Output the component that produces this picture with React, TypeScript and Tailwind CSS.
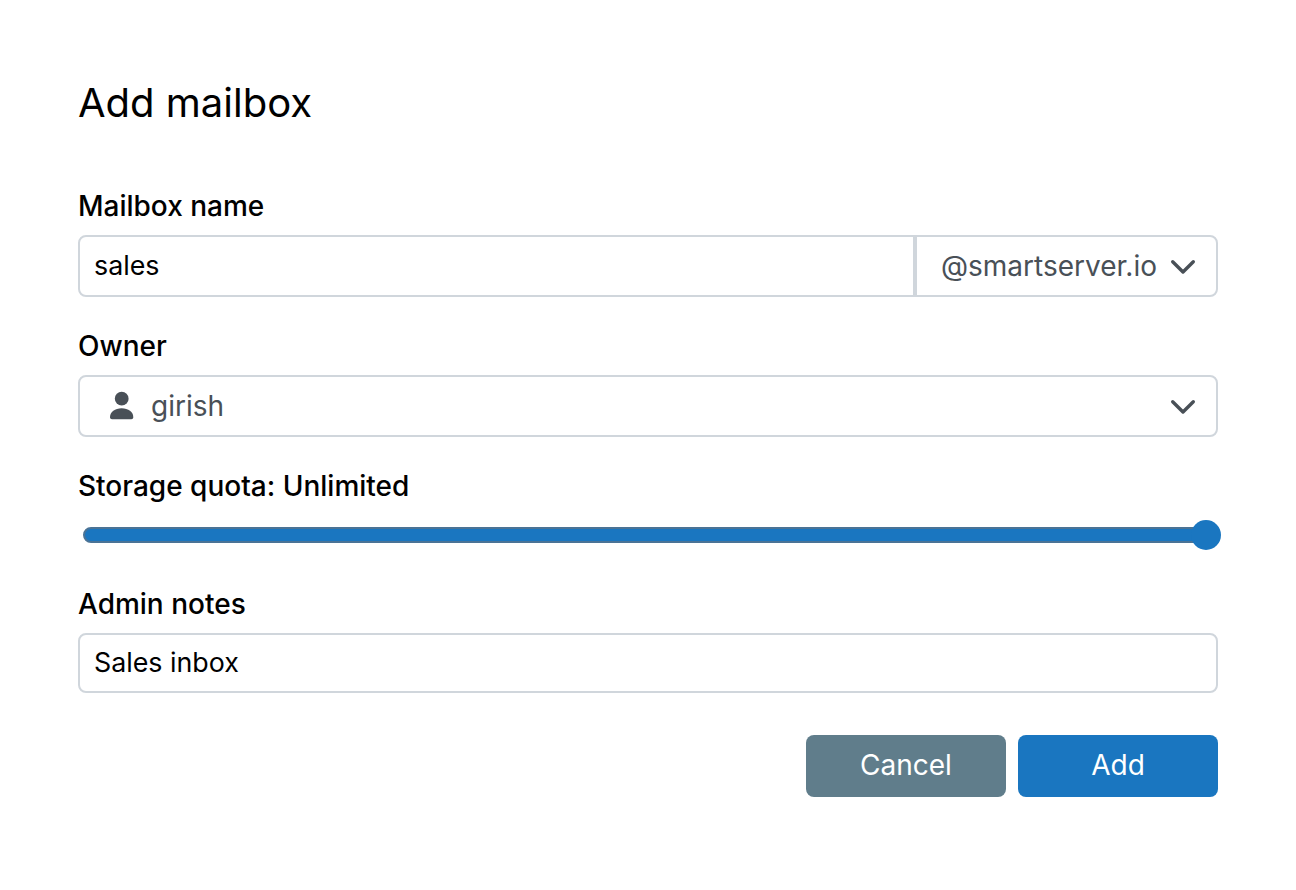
const BORDER = "border-2 border-[#d0d6dc]";

function Chevron() {
  return (
    <svg className="h-[28px] w-[28px] shrink-0 text-[#495057]" viewBox="0 0 28 28" fill="none">
      <path d="M3.7 9.7l10.3 10.3 10.3-10.3" stroke="currentColor" strokeWidth="3.4" strokeLinecap="round" strokeLinejoin="round" />
    </svg>
  );
}

function PersonIcon() {
  return (
    <svg className="h-[30px] w-[30px] shrink-0 text-[#495057]" viewBox="0 0 30 30" fill="currentColor">
      <circle cx="14.7" cy="7.7" r="6.9" />
      <path d="M3 26.3c0-5.5 5-9 11.65-9s11.65 3.5 11.65 9c0 1.1-.9 2-2 2H5c-1.1 0-2-.9-2-2z" />
    </svg>
  );
}

export default function App() {
  return (
    <div className="min-h-[890px] bg-white px-[78px] pt-[76px] font-['Inter',sans-serif] text-black antialiased">
      <h1 className="text-[40px] font-normal leading-[54px]">Add mailbox</h1>

      <label className="mt-[58px] block text-[28px] font-medium leading-[36px]">Mailbox name</label>
      <div className={`mt-[11px] flex h-[62px] rounded-lg ${BORDER}`}>
        <div className="flex flex-1 items-center pb-[2px] pl-[14px] text-[26.8px]">sales</div>
        <div className="flex w-[303px] items-center justify-between border-l-4 border-[#d0d6dc] pl-[24px] pr-[19px] text-[28px] text-[#495057]">
          <span>@smartserver.io</span>
          <Chevron />
        </div>
      </div>

      <label className="mt-[31px] block text-[28px] font-medium leading-[36px]">Owner</label>
      <div className={`mt-[11px] flex h-[62px] items-center rounded-lg pl-[27px] pr-[19px] text-[28px] text-[#495057] ${BORDER}`}>
        <PersonIcon />
        <span className="ml-[14px] flex-1">girish</span>
        <Chevron />
      </div>

      <label className="mt-[31px] block text-[28px] font-medium leading-[36px]">Storage quota: Unlimited</label>
      <div className="relative mt-[16px] h-[30px]">
        <div className="absolute left-[5px] right-[4px] top-[7px] h-[16px] rounded-full border-2 border-[#4a7396] bg-[#1a76c0]" />
        <div className="absolute right-[-3px] top-0 h-[30px] w-[30px] rounded-full bg-[#1a76c0]" />
      </div>

      <label className="mt-[36px] block text-[28px] font-medium leading-[36px]">Admin notes</label>
      <div className={`mt-[11px] flex h-[60px] items-center rounded-lg pb-[2px] pl-[14px] text-[26.8px] ${BORDER}`}>Sales inbox</div>

      <div className="mt-[42px] flex justify-end gap-3">
        <button className="h-[62px] w-[200px] rounded-lg bg-[#607d8b] pb-[2px] text-[28px] text-white">Cancel</button>
        <button className="h-[62px] w-[200px] rounded-lg bg-[#1a76c0] pb-[2px] text-[28px] text-white">Add</button>
      </div>
    </div>
  );
}
